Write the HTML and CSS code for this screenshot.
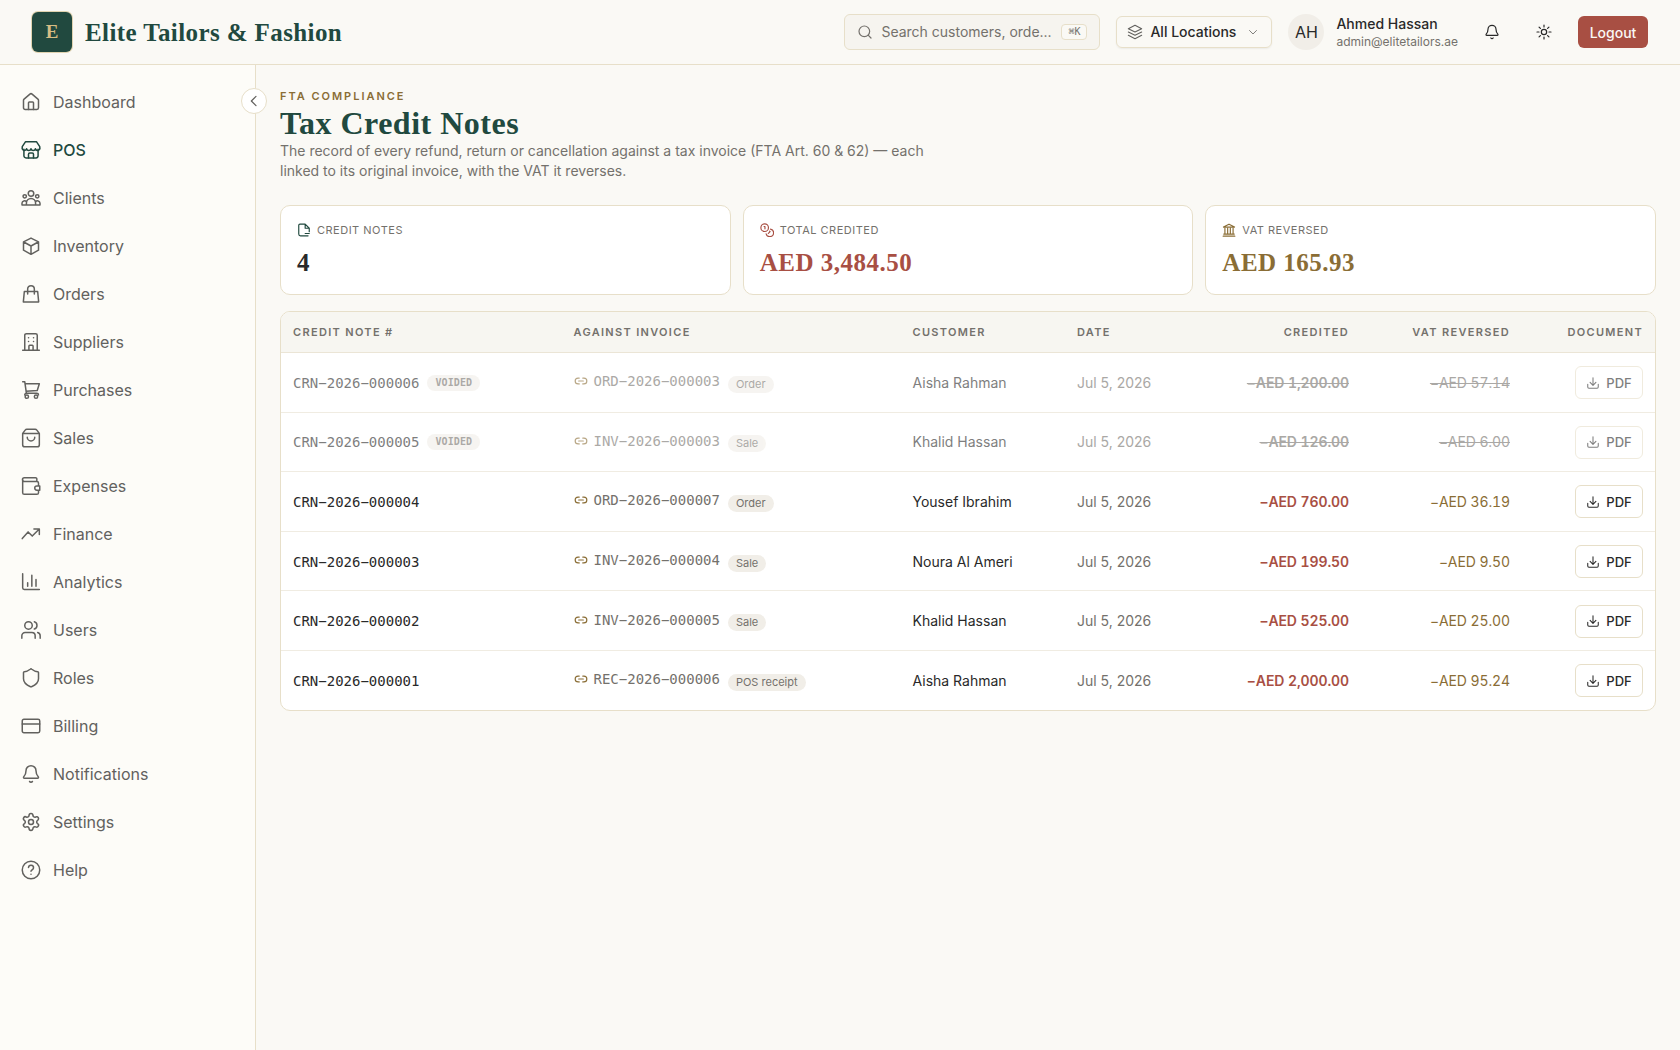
FILE: index.html
```html
<!DOCTYPE html>
<html lang="en">
  <head>
    <meta charset="UTF-8" />
    <title>Tax Credit Notes - Elite Tailors &amp; Fashion</title>
    <meta name="viewport" content="width=device-width, initial-scale=1" />
    <link rel="stylesheet" href="styles.css">
  </head>
  <body>
    <!-- shared icons -->
    <svg class="sprite" width="0" height="0">
      <symbol id="i-bell" viewBox="0 0 24 24"><path d="M10.3 21a2 2 0 0 0 3.4 0"/><path d="M3.3 15.3A1 1 0 0 0 4 17h16a1 1 0 0 0 .7-1.7C19.4 14 18 12.500 18 8A6 6 0 0 0 6 8c0 4.500-1.400 6-2.700 7.300"/></symbol>
      <symbol id="i-link" viewBox="0 0 24 24"><path d="M9 17H7A5 5 0 0 1 7 7h2M15 7h2a5 5 0 0 1 0 10h-2M8 12h8"/></symbol>
      <symbol id="i-download" viewBox="0 0 24 24"><path d="M3 14v5a2 2 0 0 0 2 2h14a2 2 0 0 0 2-2v-5M7 11l5 5 5-5M12 16V3"/></symbol>
    </svg>

    <header class="topbar">
      <div class="brand">
        <div class="logo">E</div>
        <span class="brand-name">Elite Tailors &amp; Fashion</span>
      </div>
      <div class="search">
        <svg class="icon" viewBox="0 0 24 24"><circle cx="11" cy="11" r="8"/><path d="m21 21-4.300-4.300"/></svg>
        <span>Search customers, orde...</span>
        <kbd>⌘K</kbd>
      </div>
      <div class="location">
        <svg class="icon" viewBox="0 0 24 24"><path d="M12 2 2 7l10 5 10-5zM2 12l10 5 10-5M2 17l10 5 10-5"/></svg>
        <span>All Locations</span>
        <svg class="icon chevron" viewBox="0 0 24 24"><path d="m5 9 7 7 7-7"/></svg>
      </div>
      <div class="user">
        <div class="avatar">AH</div>
        <div class="user-info">
          <div class="user-name">Ahmed Hassan</div>
          <div class="user-mail">admin@elitetailors.ae</div>
        </div>
      </div>
      <div class="top-icons">
        <svg class="icon"><use href="#i-bell"/></svg>
        <svg class="icon" viewBox="0 0 24 24"><circle cx="12" cy="12" r="4"/><path d="M12 1.500v3M12 19.500v3M4.600 4.600l2 2M17.400 17.400l2 2M1.500 12h3M19.500 12h3M6.600 17.400l-2 2M19.400 4.600l-2 2"/></svg>
      </div>
      <button class="logout">Logout</button>
    </header>

    <div class="layout">
      <nav class="sidebar">
        <button class="collapse"><svg class="icon" viewBox="0 0 24 24"><path d="m15 5-7 7 7 7"/></svg></button>
        <a><svg class="icon" viewBox="0 0 24 24"><path d="M15 21v-8a1 1 0 0 0-1-1h-4a1 1 0 0 0-1 1v8"/><path d="M3 10a2 2 0 0 1 .7-1.500l7-6a2 2 0 0 1 2.600 0l7 6A2 2 0 0 1 21 10v9a2 2 0 0 1-2 2H5a2 2 0 0 1-2-2z"/></svg>Dashboard</a>
        <a class="active"><svg class="icon" viewBox="0 0 24 24"><path d="M3.500 11v8a2.500 2.500 0 0 0 2.500 2.500h12a2.500 2.500 0 0 0 2.500-2.500v-8"/><path d="M5.500 2h13L22.500 8v1a2.600 2.600 0 0 1-5.200 1.500 2.700 2.700 0 0 1-5.300 0 2.700 2.700 0 0 1-5.300 0A2.600 2.600 0 0 1 1.500 9V8zM9 21.500V17a1.500 1.500 0 0 1 1.500-1.500h3A1.500 1.500 0 0 1 15 17v4.500"/></svg>POS</a>
        <a><svg class="icon" viewBox="0 0 24 24"><circle cx="12" cy="6.500" r="3.300"/><circle cx="4.500" cy="10" r="2"/><circle cx="19.500" cy="10" r="2"/><path d="M6.500 20.500V18a5.500 5.500 0 0 1 11 0v2.500zM6.500 20.500H1.200v-2.500a3 3 0 0 1 5.300-1.500M17.500 20.500h5.300v-2.500a3 3 0 0 0-5.300-1.500"/></svg>Clients</a>
        <a><svg class="icon" viewBox="0 0 24 24"><path d="m12 2.500 9 4.500v10l-9 5-9-5V7zM3.300 7.200 12 12l8.700-4.800M12 12v10"/></svg>Inventory</a>
        <a><svg class="icon" viewBox="0 0 24 24"><path d="M4 9h16l1.200 12.500H2.800zM8 12V6a4 4 0 0 1 8 0v6"/></svg>Orders</a>
        <a><svg class="icon" viewBox="0 0 24 24"><path d="M2 22h20M4.500 22V4a2 2 0 0 1 2-2h11a2 2 0 0 1 2 2v18M9.500 22v-5a1 1 0 0 1 1-1h3a1 1 0 0 1 1 1v5M9 7h.1M15 7h.1M9 11.500h.1M15 11.500h.1"/></svg>Suppliers</a>
        <a><svg class="icon" viewBox="0 0 24 24"><path d="M2 2h2.500l2 14H19a2 2 0 0 1 2 2M5 4.500h17l-2.500 8-13.500 1M6.500 16a2 2 0 0 0-2 2"/><circle cx="7" cy="20" r="2"/><circle cx="18" cy="20" r="2"/></svg>Purchases</a>
        <a><svg class="icon" viewBox="0 0 24 24"><path d="M2 6.500 5 2.500A2.500 2.500 0 0 1 7 1.500h10a2.500 2.500 0 0 1 2 1l3 4V20a2.500 2.500 0 0 1-2.500 2.500h-15A2.500 2.500 0 0 1 2 20zM2 6.500h20M7.500 11a4.500 4.500 0 0 0 9 0"/></svg>Sales</a>
        <a><svg class="icon" viewBox="0 0 24 24"><path d="M19 6V3.500A1.500 1.500 0 0 0 17.500 2H4a2 2 0 0 0 0 4.500h15a2 2 0 0 1 2 2V12M2 4v16a2 2 0 0 0 2 2h15a2 2 0 0 0 2-2v-3M22.500 12H19a2.500 2.500 0 0 0 0 5h3.500z"/></svg>Expenses</a>
        <a><svg class="icon" viewBox="0 0 24 24"><path d="m1.500 17.500 7-8 5 5L22 6M15.500 6H22v6.500"/></svg>Finance</a>
        <a><svg class="icon" viewBox="0 0 24 24"><path d="M2 2v17a2 2 0 0 0 2 2h18M8 17v-4M13 17V4M18 17V9"/></svg>Analytics</a>
        <a><svg class="icon" viewBox="0 0 24 24"><path d="M17 22v-3a4 4 0 0 0-4-4H5a4 4 0 0 0-4 4v3M23 22v-3a4 4 0 0 0-3-3.900M16 2.200a4.500 4.500 0 0 1 0 8.600"/><circle cx="9" cy="6.500" r="4.500"/></svg>Users</a>
        <a><svg class="icon" viewBox="0 0 24 24"><path d="M21 13c0 5-3.500 7.500-8.400 9.500a1.500 1.500 0 0 1-1.200 0C6.500 20.500 3 18 3 13V5.500a1 1 0 0 1 1-1c2.500 0 5-1.400 7-3a1.500 1.500 0 0 1 2 0c2 1.600 4.500 3 7 3a1 1 0 0 1 1 1z"/></svg>Roles</a>
        <a><svg class="icon" viewBox="0 0 24 24"><rect x="1.500" y="4" width="21" height="16" rx="2"/><path d="M1.500 9.500h21"/></svg>Billing</a>
        <a><svg class="icon"><use href="#i-bell"/></svg>Notifications</a>
        <a><svg class="icon" viewBox="0 0 24 24"><path d="M9.700 4.100a2.300 2.300 0 0 1 4.600 0 2.300 2.300 0 0 0 3.300 1.900 2.300 2.300 0 0 1 2.300 4 2.300 2.300 0 0 0 0 3.900 2.300 2.300 0 0 1-2.300 4 2.300 2.300 0 0 0-3.300 1.900 2.300 2.300 0 0 1-4.600 0 2.300 2.300 0 0 0-3.300-1.900 2.300 2.300 0 0 1-2.300-4 2.300 2.300 0 0 0 0-3.900 2.300 2.300 0 0 1 2.300-4 2.300 2.300 0 0 0 3.300-1.900"/><circle cx="12" cy="12" r="3"/></svg>Settings</a>
        <a><svg class="icon" viewBox="0 0 24 24"><circle cx="12" cy="12" r="10.500"/><path d="M9 9a3 3 0 0 1 6 .5c0 2-3 2.500-3 4M12 17.200h.01"/></svg>Help</a>
      </nav>

      <main class="content">
        <div class="eyebrow">FTA Compliance</div>
        <h1>Tax Credit Notes</h1>
        <p class="lead">The record of every refund, return or cancellation against a tax invoice (FTA Art. 60 &amp; 62) — each linked to its original invoice, with the VAT it reverses.</p>

        <section class="cards">
          <div class="card">
            <div class="card-label"><svg class="icon green" viewBox="0 0 24 24"><path d="M19 22H6a3 3 0 0 1-3-3V4a2 2 0 0 1 2-2h9l7 7v6M14 2v7h7M14 18h7"/></svg>Credit notes</div>
            <div class="card-value">4</div>
          </div>
          <div class="card">
            <div class="card-label"><svg class="icon red" viewBox="0 0 24 24"><circle cx="8" cy="8" r="6.500"/><path d="M18 10.500a6.500 6.500 0 1 1-7.500 8M7 6h1.500v4M16.500 14l.8.800-3 3"/></svg>Total credited</div>
            <div class="card-value red">AED 3,484.50</div>
          </div>
          <div class="card">
            <div class="card-label"><svg class="icon gold" viewBox="0 0 24 24"><path d="M2 22.500h20M3 19h18M5 9v9M9.700 9v9M14.300 9v9M19 9v9M2.500 7 12 2l9.500 5z"/></svg>VAT reversed</div>
            <div class="card-value gold">AED 165.93</div>
          </div>
        </section>

        <div class="table-wrap">
          <table>
            <colgroup><col class="c-note"><col class="c-inv"><col class="c-cust"><col class="c-date"><col class="c-cred"><col class="c-vat"><col class="c-doc"></colgroup>
            <thead>
              <tr><th>Credit note #</th><th>Against invoice</th><th>Customer</th><th>Date</th><th class="num">Credited</th><th class="num">VAT reversed</th><th class="num">Document</th></tr>
            </thead>
            <tbody>
              <tr class="voided">
                <td><div class="note">CRN−2026−000006<span class="void-tag">VOIDED</span></div></td>
                <td><div class="inv"><svg class="icon"><use href="#i-link"/></svg>ORD−2026−000003<span class="tag">Order</span></div></td>
                <td>Aisha Rahman</td><td class="date">Jul 5, 2026</td>
                <td class="num credited">−AED 1,200.00</td><td class="num vat">−AED 57.14</td>
                <td class="num"><button class="pdf"><svg class="icon"><use href="#i-download"/></svg>PDF</button></td>
              </tr>
              <tr class="voided">
                <td><div class="note">CRN−2026−000005<span class="void-tag">VOIDED</span></div></td>
                <td><div class="inv"><svg class="icon"><use href="#i-link"/></svg>INV−2026−000003<span class="tag">Sale</span></div></td>
                <td>Khalid Hassan</td><td class="date">Jul 5, 2026</td>
                <td class="num credited">−AED 126.00</td><td class="num vat">−AED 6.00</td>
                <td class="num"><button class="pdf"><svg class="icon"><use href="#i-download"/></svg>PDF</button></td>
              </tr>
              <tr>
                <td><div class="note">CRN−2026−000004</div></td>
                <td><div class="inv"><svg class="icon"><use href="#i-link"/></svg>ORD−2026−000007<span class="tag">Order</span></div></td>
                <td>Yousef Ibrahim</td><td class="date">Jul 5, 2026</td>
                <td class="num credited">−AED 760.00</td><td class="num vat">−AED 36.19</td>
                <td class="num"><button class="pdf"><svg class="icon"><use href="#i-download"/></svg>PDF</button></td>
              </tr>
              <tr>
                <td><div class="note">CRN−2026−000003</div></td>
                <td><div class="inv"><svg class="icon"><use href="#i-link"/></svg>INV−2026−000004<span class="tag">Sale</span></div></td>
                <td>Noura Al Ameri</td><td class="date">Jul 5, 2026</td>
                <td class="num credited">−AED 199.50</td><td class="num vat">−AED 9.50</td>
                <td class="num"><button class="pdf"><svg class="icon"><use href="#i-download"/></svg>PDF</button></td>
              </tr>
              <tr>
                <td><div class="note">CRN−2026−000002</div></td>
                <td><div class="inv"><svg class="icon"><use href="#i-link"/></svg>INV−2026−000005<span class="tag">Sale</span></div></td>
                <td>Khalid Hassan</td><td class="date">Jul 5, 2026</td>
                <td class="num credited">−AED 525.00</td><td class="num vat">−AED 25.00</td>
                <td class="num"><button class="pdf"><svg class="icon"><use href="#i-download"/></svg>PDF</button></td>
              </tr>
              <tr>
                <td><div class="note">CRN−2026−000001</div></td>
                <td><div class="inv"><svg class="icon"><use href="#i-link"/></svg>REC−2026−000006<span class="tag">POS receipt</span></div></td>
                <td>Aisha Rahman</td><td class="date">Jul 5, 2026</td>
                <td class="num credited">−AED 2,000.00</td><td class="num vat">−AED 95.24</td>
                <td class="num"><button class="pdf"><svg class="icon"><use href="#i-download"/></svg>PDF</button></td>
              </tr>
            </tbody>
          </table>
        </div>
      </main>
    </div>
  </body>
</html>
```
FILE: styles.css
```css
* {
  box-sizing: border-box;
}
body {
  margin: 0;
  min-height: 100vh;
  display: flex;
  flex-direction: column;
  font-family: Inter, sans-serif;
  font-size: 14px;
  line-height: 20px;
  background: #faf9f5;
  color: #292929;
}
button {
  font-family: inherit;
}
.sprite {
  position: absolute;
}
.icon {
  width: 16px;
  height: 16px;
  flex: none;
  fill: none;
  stroke: currentColor;
  stroke-width: 1.8;
  stroke-linecap: round;
  stroke-linejoin: round;
}
.green { color: #21493f; }
.red { color: #a84f43; }
.gold { color: #8a6d35; }

/* top bar */
.topbar {
  height: 65px;
  flex: none;
  display: flex;
  align-items: center;
  padding: 0 32px;
  background: #faf9f5;
  border-bottom: 1px solid #e7dfc9;
}
.brand {
  display: flex;
  align-items: center;
  gap: 13px;
  margin-right: auto;
}
.logo {
  width: 40px;
  height: 40px;
  display: flex;
  align-items: center;
  justify-content: center;
  border-radius: 6px;
  background: #21493f;
  box-shadow: 0 0 0 1px #e0d3b0;
  color: #d6bd84;
  font: bold 19px "Liberation Serif", serif;
}
.brand-name {
  padding-top: 2px;
  font: bold 25px/32px "Liberation Serif", serif;
  letter-spacing: .4px;
  color: #21493f;
}
.search {
  width: 256px;
  height: 36px;
  display: flex;
  align-items: center;
  padding: 0 12px;
  border: 1px solid #e7dfc9;
  border-radius: 6px;
  background: #f6f4ef;
  color: #74716c;
}
.search span {
  margin-left: 8px;
  white-space: nowrap;
}
.search kbd {
  margin-left: auto;
  height: 16px;
  padding: 0 6px;
  border: 1px solid #e7dfc9;
  border-radius: 4px;
  background: #faf9f5;
  font: 10px/14px "DejaVu Sans Mono", monospace;
}
.location {
  width: 156px;
  height: 32px;
  display: flex;
  align-items: center;
  margin-left: 16px;
  padding: 0 12px 0 10px;
  border: 1px solid #e7dfc9;
  border-radius: 6px;
  box-shadow: 0 1px 2px rgba(0, 0, 0, .06);
  font-weight: 500;
}
.location .icon {
  color: #62615e;
  stroke-width: 1.6;
}
.location span {
  margin-left: 7px;
}
.location .chevron {
  width: 12px;
  height: 12px;
  margin-left: auto;
}
.user {
  display: flex;
  align-items: center;
  gap: 12px;
  margin-left: 16px;
}
.avatar {
  width: 36px;
  height: 36px;
  border-radius: 50%;
  background: #f1eee8;
  font-size: 16px;
  line-height: 37px;
  text-align: center;
}
.user-name {
  font-weight: 500;
  line-height: 18px;
}
.user-mail {
  font-size: 12px;
  line-height: 17px;
  color: #74716c;
}
.top-icons {
  display: flex;
  gap: 36px;
  margin: 0 26px;
}
.logout {
  width: 70px;
  height: 32px;
  padding: 0;
  border: 0;
  border-radius: 6px;
  background: #a84f43;
  color: #faf8f5;
  font-size: 14px;
  font-weight: 500;
}

/* sidebar */
.layout {
  flex: 1;
  display: flex;
}
.sidebar {
  position: relative;
  width: 256px;
  flex: none;
  padding: 13px 0 0 21px;
  background: #fdfcf8;
  border-right: 1px solid #e7dfc9;
}
.sidebar a {
  height: 48px;
  display: flex;
  align-items: center;
  gap: 12px;
  font-size: 16px;
  color: #62615e;
}
.sidebar a .icon {
  width: 20px;
  height: 20px;
}
.sidebar a.active {
  color: #21493f;
  font-weight: 500;
}
.collapse {
  position: absolute;
  top: 23px;
  right: -12px;
  width: 26px;
  height: 26px;
  display: flex;
  align-items: center;
  justify-content: center;
  padding: 0;
  border: 1px solid #e7dfc9;
  border-radius: 50%;
  background: #fff;
  color: #62615e;
}

/* page content */
.content {
  flex: 1;
  padding: 24px;
}
.eyebrow {
  font-size: 11px;
  font-weight: 600;
  line-height: 15px;
  letter-spacing: 1.98px;
  text-transform: uppercase;
  color: #8a6d35;
}
h1 {
  margin: 0;
  padding-top: 2px;
  font: bold 32px/35px "Liberation Serif", serif;
  letter-spacing: .5px;
  color: #21493f;
}
.lead {
  max-width: 672px;
  margin: 0;
  color: #74716c;
}
.cards {
  display: grid;
  grid-template-columns: repeat(3, 1fr);
  gap: 12px;
  margin-top: 24px;
}
.card {
  height: 90px;
  padding: 16px;
  border: 1px solid #e7dfc9;
  border-radius: 10px;
  background: #fff;
}
.card-label {
  display: flex;
  align-items: center;
  gap: 6px;
  height: 16px;
  font-size: 11px;
  letter-spacing: .5px;
  text-transform: uppercase;
  color: #74716c;
}
.card-label .icon {
  width: 14px;
  height: 14px;
  stroke-width: 2;
}
.card-value {
  margin-top: 9px;
  font: bold 25px/32px "Liberation Serif", serif;
  letter-spacing: .5px;
}

.table-wrap {
  margin-top: 16px;
  border: 1px solid #e7dfc9;
  border-radius: 10px;
  background: #fff;
  overflow: hidden;
}
table {
  width: 100%;
  table-layout: fixed;
  border-collapse: separate;
  border-spacing: 0;
}
.c-note { width: 280.5px; }
.c-inv { width: 339px; }
.c-cust { width: 164.5px; }
.c-date { width: 126px; }
.c-cred { width: 170px; }
.c-vat { width: 161px; }
th {
  height: 41px;
  padding: 0 12px;
  border-bottom: 1px solid #ebe5d6;
  background: #f7f6f1;
  font-size: 11px;
  font-weight: 600;
  letter-spacing: 1.32px;
  text-align: left;
  text-transform: uppercase;
  white-space: nowrap;
  color: #74716c;
}
td {
  height: 59.6px;
  padding: 1px 12px 0;
  border-bottom: 1px solid #f0ece2;
}
tr:last-child td {
  height: 58.6px;
  border-bottom: 0;
}
.num {
  text-align: right;
  font-variant-numeric: tabular-nums;
}
.note,
.inv {
  display: flex;
  align-items: center;
  font-family: "DejaVu Sans Mono", monospace;
}
.inv {
  color: #74716c;
  margin-top: -3px;
}
.inv .icon {
  width: 14px;
  height: 14px;
  margin-right: 6px;
  color: #8a6d35;
  stroke-width: 2;
}
.tag,
.void-tag {
  margin-left: 8px;
  padding: 0 8px;
  border-radius: 9px;
  background: #f1eee8;
  font-size: 11px;
  line-height: 17px;
  color: #74716c;
}
.tag {
  position: relative;
  top: 3px;
  font-family: Inter, sans-serif;
}
.void-tag {
  font-size: 10px;
  font-weight: bold;
  line-height: 16px;
  letter-spacing: .1px;
}
.date {
  color: #74716c;
}
.credited {
  font-weight: 600;
  letter-spacing: -.1px;
  color: #a84f43;
}
.vat {
  letter-spacing: -.1px;
  color: #8a6d35;
}
.pdf {
  width: 68px;
  height: 33px;
  display: inline-flex;
  align-items: center;
  justify-content: center;
  gap: 6px;
  padding: 0;
  border: 1px solid #e7dfc9;
  border-radius: 6px;
  background: #fff;
  color: #292929;
  font-size: 13px;
  font-weight: 500;
  vertical-align: middle;
}
.pdf .icon {
  width: 14px;
  height: 14px;
}
.voided td > * {
  opacity: .6;
}
.voided td {
  color: #7f7f7f;
}
.voided .note {
  color: #292929;
}
.voided .date,
.voided .vat,
.voided .credited {
  color: #aaa8a5;
}
.voided .vat,
.voided .credited {
  text-decoration: line-through;
}
```
